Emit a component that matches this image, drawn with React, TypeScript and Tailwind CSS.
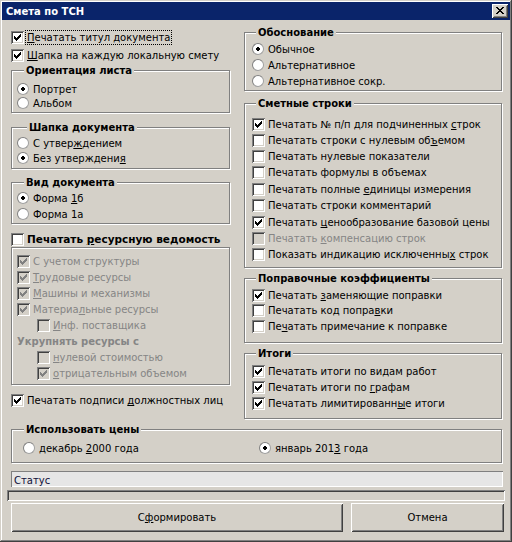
import type { ReactNode } from "react"

// pixel patterns of the classic Windows glyphs
const CHECK = "M0 2h1v3H0zM1 3h1v3H1zM2 4h1v3H2zM3 3h1v3H3zM4 2h1v3H4zM5 1h1v3H5zM6 0h1v3H6z"
const DOT = "M1 0h2v4H1zM0 1h4v2H0z"
const CROSS =
  "M0 0h2v1H0zM6 0h2v1H6zM1 1h2v1H1zM5 1h2v1H5zM2 2h4v1H2zM3 3h2v1H3zM2 4h4v1H2zM1 5h2v1H1zM5 5h2v1H5zM0 6h2v1H0zM6 6h2v1H6z"

const sunken =
  "shadow-[inset_1px_1px_0_#808080,inset_-1px_-1px_0_#ffffff,inset_2px_2px_0_#404040,inset_-2px_-2px_0_#d4d0c8]"
const raised =
  "shadow-[inset_1px_1px_0_#ffffff,inset_-1px_-1px_0_#404040,inset_2px_2px_0_#d4d0c8,inset_-2px_-2px_0_#808080]"

// "&" marks the mnemonic letter
function Mn({ text }: { text: string }) {
  const i = text.indexOf("&")
  if (i < 0) return <>{text}</>
  return (
    <>
      {text.slice(0, i)}
      <u>{text[i + 1]}</u>
      {text.slice(i + 2)}
    </>
  )
}

function Box({ checked, disabled }: { checked?: boolean; disabled?: boolean }) {
  return (
    <span
      className={`flex h-[13px] w-[13px] shrink-0 items-center justify-center ${sunken} ${
        disabled ? "bg-[#d4d0c8]" : "bg-white"
      }`}
    >
      {checked && (
        <svg width="7" height="7" viewBox="0 0 7 7" shapeRendering="crispEdges">
          <path d={CHECK} fill={disabled ? "#808080" : "#000000"} />
        </svg>
      )}
    </span>
  )
}

function Check({
  label,
  checked,
  disabled,
  focus,
  className = "",
}: {
  label: string
  checked?: boolean
  disabled?: boolean
  focus?: boolean
  className?: string
}) {
  return (
    <div className={`flex h-[13px] items-center gap-[2px] ${className}`}>
      <Box checked={checked} disabled={disabled} />
      <span
        className={`whitespace-nowrap px-[1px] leading-[13px] ${disabled ? "text-[#858585]" : ""} ${
          focus ? "outline-1 outline-dotted outline-black" : ""
        }`}
      >
        <Mn text={label} />
      </span>
    </div>
  )
}

function Radio({ label, on, className = "" }: { label: string; on?: boolean; className?: string }) {
  return (
    <div className={`flex h-[12px] items-center gap-[3px] ${className}`}>
      <span className="flex h-[12px] w-[12px] shrink-0 items-center justify-center rounded-full border border-[#808080] border-b-[#a0a0a0] border-r-[#a0a0a0] bg-white">
        {on && (
          <svg width="4" height="4" viewBox="0 0 4 4" shapeRendering="crispEdges">
            <path d={DOT} fill="#000000" />
          </svg>
        )}
      </span>
      <span className="whitespace-nowrap px-[1px] leading-[13px]">
        <Mn text={label} />
      </span>
    </div>
  )
}

function Group({
  title,
  titleLeft,
  className = "",
  children,
}: {
  title?: string
  titleLeft?: string
  className?: string
  children: ReactNode
}) {
  return (
    <div className={`relative border border-[#808080] shadow-[inset_1px_1px_0_#ffffff,1px_1px_0_#ffffff] ${className}`}>
      {title && (
        <span className={`absolute top-[-7px] bg-[#d4d0c8] px-[2px] font-bold leading-[13px] ${titleLeft}`}>
          {title}
        </span>
      )}
      {children}
    </div>
  )
}

function Button({ label, className = "" }: { label: string; className?: string }) {
  return (
    <div className={`flex h-[29px] items-center justify-center bg-[#d4d0c8] ${raised} ${className}`}>
      <Mn text={label} />
    </div>
  )
}

export default function App() {
  return (
    <div
      className={`flex h-[542px] w-[512px] flex-col bg-[#d4d0c8] font-['DejaVu_Sans',sans-serif] text-[10px] text-black shadow-[inset_-1px_-1px_0_#404040,inset_1px_1px_0_#d4d0c8,inset_-2px_-2px_0_#808080,inset_2px_2px_0_#ffffff]`}
    >
      {/* title bar */}
      <div className="mx-[2px] mt-[2px] flex h-[18px] items-center justify-between bg-[#0a246a] pl-[4px] pr-[2px]">
        <span className="font-bold leading-[13px] text-white">Смета по ТСН</span>
        <div className={`flex h-[14px] w-[16px] items-start justify-start bg-[#d4d0c8] pl-[4px] pt-[3px] ${raised}`}>
          <svg width="8" height="7" viewBox="0 0 8 7" shapeRendering="crispEdges">
            <path d={CROSS} fill="#000000" />
          </svg>
        </div>
      </div>

      <div className="flex items-start pl-[11px]">
        {/* left column */}
        <div className="flex w-[219px] flex-col pt-[11px]">
          <Check focus checked label="&Печатать титул документа" />
          <Check className="mt-[5px]" checked label="&Шапка на каждую локальную смету" />

          <Group title="Ориентация листа" titleLeft="left-[12px]" className="mt-[8px] h-[43px] pl-[5px] pt-[12px]">
            <div className="flex flex-col gap-[2px]">
              <Radio on label="Портрет" />
              <Radio label="Альбом" />
            </div>
          </Group>

          <Group title="Шапка документа" titleLeft="left-[15px]" className="mt-[14px] h-[42px] pl-[5px] pt-[9px]">
            <div className="flex flex-col gap-[3px]">
              <Radio label="С утвер&ждением" />
              <Radio on label="Без утверждени&я" />
            </div>
          </Group>

          <Group title="Вид документа" titleLeft="left-[12px]" className="mt-[13px] h-[42px] pl-[5px] pt-[9px]">
            <div className="flex flex-col gap-[4px]">
              <Radio on label="Форма &1б" />
              <Radio label="Форма 1а" />
            </div>
          </Group>

          <div className="mt-[9px] flex h-[13px] items-center gap-[3px]">
            <Box />
            <span className="whitespace-nowrap text-[10.5px] font-bold leading-[13px]">
              <Mn text="Печатать &ресурсную ведомость" />
            </span>
          </div>

          <Group className="mt-[1px] h-[138px] pl-[5px] pt-[7px]">
            <div className="flex flex-col gap-[3px]">
              <Check disabled checked label="С учетом структуры" />
              <Check disabled checked label="&Трудовые ресурсы" />
              <Check disabled checked label="&Машины и механизмы" />
              <Check disabled checked label="Материа&льные ресурсы" />
              <Check disabled className="ml-[20px]" label="&Инф. поставщика" />
              <div className="h-[13px] whitespace-nowrap font-bold leading-[13px] text-[#858585]">Укрупнять ресурсы с</div>
              <Check disabled className="ml-[20px]" label="&нулевой стоимостью" />
              <Check disabled checked className="ml-[20px]" label="&отрицательным объемом" />
            </div>
          </Group>

          <Check className="mt-[9px]" checked label="Печатать подписи &должностных лиц" />
        </div>

        {/* right column */}
        <div className="ml-[14px] flex w-[258px] flex-col pt-[12px]">
          <Group title="Обоснование" titleLeft="left-[11px]" className="h-[59px] pl-[7px] pt-[10px]">
            <div className="flex flex-col gap-[4px]">
              <Radio on label="Обычное" />
              <Radio label="Альтернативное" />
              <Radio label="Альтернативное сокр." />
            </div>
          </Group>

          <Group title="Сметные строки" titleLeft="left-[11px]" className="mt-[12px] h-[165px] pl-[7px] pt-[14px]">
            <div className="flex flex-col gap-[3px]">
              <Check checked label="Печатать № п/п для подчиненных &строк" />
              <Check label="Печатать строки с нулевым об&ъемом" />
              <Check label="Печатать нулевые показатели" />
              <Check label="Печатать формулы в объемах" />
              <Check className="mt-[1px]" label="Печатать полные &единицы измерения" />
              <Check label="Печатать строки комментарий" />
              <Check className="mt-[1px]" checked label="Печатать &ценообразование базовой цены" />
              <Check disabled label="Печатать &компенсацию строк" />
              <Check label="Показать индикацию исключенны&х строк" />
            </div>
          </Group>

          <Group title="Поправочные коэффициенты" titleLeft="left-[11px]" className="mt-[10px] h-[65px] pl-[7px] pt-[10px]">
            <div className="flex flex-col gap-[2px]">
              <Check checked label="Печатать &заменяющие поправки" />
              <Check label="Печатать код попра&вки" />
              <Check className="mt-[1px]" label="Пе&чатать примечание к поправке" />
            </div>
          </Group>

          <Group title="Итоги" titleLeft="left-[11px]" className="mt-[10px] h-[66px] pl-[7px] pt-[11px]">
            <div className="flex flex-col gap-[3px]">
              <Check checked label="Печатать итоги по видам работ" />
              <Check checked label="Печатать итоги по &графам" />
              <Check checked label="Печатать лимитированн&ые итоги" />
            </div>
          </Group>
        </div>
      </div>

      <Group title="Использовать цены" titleLeft="left-[12px]" className="ml-[11px] mt-[10px] h-[34px] w-[491px] pl-[11px] pt-[12px]">
        <div className="flex">
          <Radio className="w-[236px]" label="декабрь &2000 года" />
          <Radio on label="январь 201&3 года" />
        </div>
      </Group>

      <div className="ml-[11px] mt-[8px] flex h-[16px] w-[492px] items-center bg-[#e6e6e6] pl-[3px] pt-[2px] text-[#10103a] shadow-[inset_1px_1px_0_#808080,inset_-1px_-1px_0_#ffffff]">
        Статус
      </div>

      <div className="ml-[7px] mt-[3px] h-[11px] w-[498px] shadow-[inset_1px_1px_0_#808080,inset_-1px_-1px_0_#ffffff,inset_2px_2px_0_#404040]" />

      <div className="ml-[11px] mt-[2px] flex gap-[8px]">
        <Button className="w-[332px]" label="С&формировать" />
        <Button className="w-[153px]" label="Отмена" />
      </div>
    </div>
  )
}
